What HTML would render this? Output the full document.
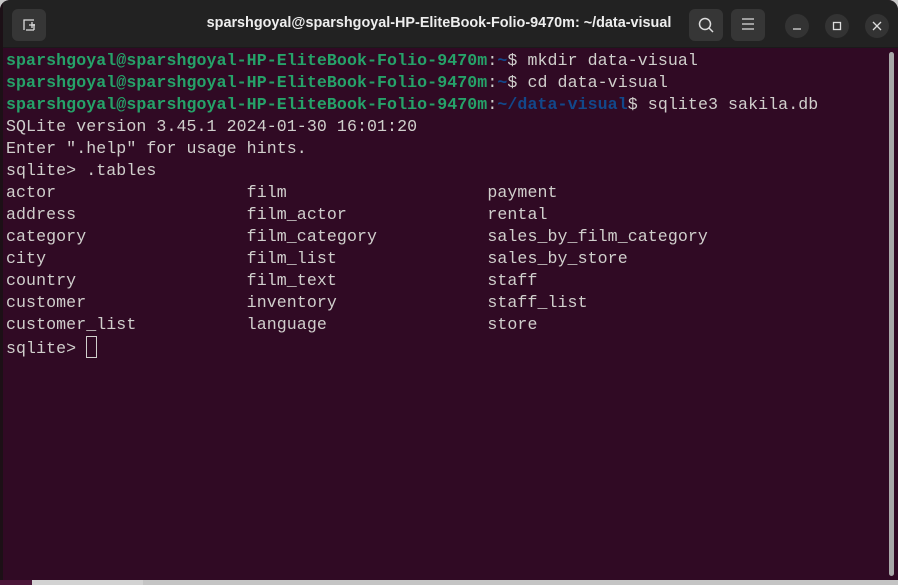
<!DOCTYPE html>
<html><head><style>
html,body{margin:0;padding:0;width:898px;height:585px;overflow:hidden;background:#c8c8c8;}
.win{position:absolute;left:0;top:0;width:898px;height:580px;background:#300a24;border-radius:10px 10px 0 0;overflow:hidden;}
.tb{position:absolute;left:0;top:0;width:898px;height:47px;background:#222222;border-bottom:1px solid #1a1a1a;}
.title{position:absolute;left:0;width:878px;top:15px;text-align:center;font:bold 14.4px "Liberation Sans",sans-serif;color:#eeeeee;}
.btn{position:absolute;top:9px;width:34px;height:32px;background:#363636;border-radius:6px;}
.cb{position:absolute;top:14px;width:24px;height:24px;background:#333;border-radius:50%;}
pre{position:absolute;left:6px;top:50px;margin:0;font:16.6px/22px "Liberation Mono",monospace;letter-spacing:0.07px;color:#d0cfcc;}
.g{color:#26a269;font-weight:bold}.b{color:#12488b;font-weight:bold}
.cur{display:inline-block;width:9px;height:20px;border:1px solid #d0cfcc;vertical-align:-5px;}
.sb{position:absolute;left:889px;top:52px;width:5px;height:524px;background:#a8a8a8;border-radius:3px;}
.bot{position:absolute;left:0;top:580px;width:898px;height:5px;background:#c4c4c4;}
</style></head><body>
<div class="win">
<div class="tb">
<div class="btn" style="left:12px"><svg width="34" height="32"><path d="M12 21V11h10M22 15v6M14 21h8M17 16h6M20 13v6" stroke="#ddd" stroke-width="1.3" fill="none"/></svg></div>
<div class="title">sparshgoyal@sparshgoyal-HP-EliteBook-Folio-9470m: ~/data-visual</div>
<div class="btn" style="left:689px"><svg width="34" height="32"><circle cx="16" cy="15" r="5.5" stroke="#ddd" stroke-width="1.5" fill="none"/><path d="M20 19l4 4" stroke="#ddd" stroke-width="1.5"/></svg></div>
<div class="btn" style="left:731px"><svg width="34" height="32"><path d="M11 10h12M11 15h12M11 20h12" stroke="#ddd" stroke-width="1.3"/></svg></div>
<div class="cb" style="left:785px"><svg width="24" height="24"><path d="M8 15h8" stroke="#ddd" stroke-width="1.3"/></svg></div>
<div class="cb" style="left:825px"><svg width="24" height="24"><rect x="8.5" y="8.5" width="7" height="7" stroke="#ddd" stroke-width="1.3" fill="none"/></svg></div>
<div class="cb" style="left:865px"><svg width="24" height="24"><path d="M8 8l8 8M16 8l-8 8" stroke="#ddd" stroke-width="1.3"/></svg></div>
</div>
<pre><span class="g">sparshgoyal@sparshgoyal-HP-EliteBook-Folio-9470m</span>:<span class="b">~</span>$ mkdir data-visual
<span class="g">sparshgoyal@sparshgoyal-HP-EliteBook-Folio-9470m</span>:<span class="b">~</span>$ cd data-visual
<span class="g">sparshgoyal@sparshgoyal-HP-EliteBook-Folio-9470m</span>:<span class="b">~/data-visual</span>$ sqlite3 sakila.db
SQLite version 3.45.1 2024-01-30 16:01:20
Enter ".help" for usage hints.
sqlite&gt; .tables
actor                   film                    payment
address                 film_actor              rental
category                film_category           sales_by_film_category
city                    film_list               sales_by_store
country                 film_text               staff
customer                inventory               staff_list
customer_list           language                store
sqlite&gt; <span class="cur"></span></pre>
<div class="sb"></div>
<div style="position:absolute;left:0;top:0;width:3px;height:580px;background:#1c1016"></div>
</div>
<div class="bot"></div>
<div style="position:absolute;left:0;top:580px;width:32px;height:5px;background:#4a1538"></div>
<div style="position:absolute;left:32px;top:580px;width:111px;height:5px;background:#d2d2d2"></div>
</body></html>
